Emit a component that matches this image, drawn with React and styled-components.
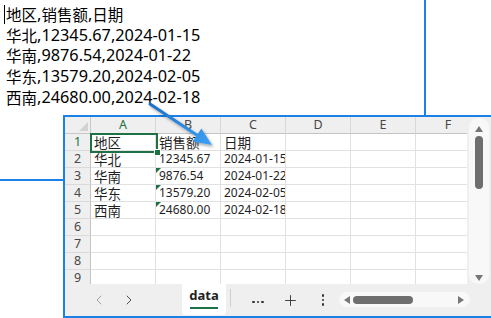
import React from 'react';
import styled, { createGlobalStyle } from 'styled-components';
import { ChevronLeft, ChevronRight, Plus } from 'lucide-react';

const BLUE = '#1a82e6';
const GREEN = '#1e7145';

const Global = createGlobalStyle`
  html, body { margin: 0; padding: 0; background: #fff; overflow: hidden; }
  #root { width: 491px; height: 318px; }
`;

const CJK = /([\u2E80-\u9FFF\uFF00-\uFFEF]+)/;

const Han = styled.span`
  display: inline-block;
  font-family: "Noto Sans CJK SC", sans-serif;
  font-size: ${(p) => p.$size}px;
  line-height: ${(p) => p.$lh}px;
  height: ${(p) => p.$lh}px;
  vertical-align: top;
`;

function Mixed({ text, han, lh }) {
  return text
    .split(CJK)
    .filter(Boolean)
    .map((part, i) =>
      CJK.test(part) ? (
        <Han key={i} $size={han} $lh={lh}>{part}</Han>
      ) : (
        <React.Fragment key={i}>{part}</React.Fragment>
      )
    );
}

const Page = styled.div`
  position: relative;
  width: 491px;
  height: 318px;
  overflow: hidden;
  background: #fff;
  font-family: "Noto Sans", "Noto Sans CJK SC", sans-serif;
`;

/* ---------- CSV text window ---------- */
const TextBox = styled.div`
  position: absolute;
  left: -2px;
  top: -2px;
  width: 428px;
  height: 183px;
  box-sizing: border-box;
  border: 2px solid ${BLUE};
  background: #fff;
  padding: 4px 0 0 4px;
  font-size: 16.3px;
  line-height: 20.7px;
  color: #000;
`;

const TextLine = styled.div`
  white-space: nowrap;
  height: 20.7px;
`;

const Caret = styled.span`
  display: inline-block;
  width: 1px;
  height: 19px;
  background: #000;
  margin-right: 1px;
  vertical-align: top;
  margin-top: 1px;
`;

const Indent = styled.span`
  display: inline-block;
  width: 2px;
`;

/* ---------- Spreadsheet window ---------- */
const SheetWindow = styled.div`
  position: absolute;
  left: 63px;
  top: 115px;
  width: 430px;
  height: 203px;
  box-sizing: border-box;
  border: 2px solid ${BLUE};
  background: #efefef;
  display: grid;
  grid-template-rows: 167px 1fr;
  z-index: 2;
`;

const GridArea = styled.div`
  display: flex;
  min-height: 0;
`;

const Sheet = styled.div`
  position: relative;
  width: 402px;
  overflow: hidden;
  background: #fff;
  display: grid;
  grid-template-columns: 26px repeat(6, 65px);
  grid-auto-rows: 17px;
  font-size: 12px;
  color: #1f1f1f;
`;

const Corner = styled.div`
  position: relative;
  background: #efefef;
  border-right: 1px solid #c8c8c8;
  border-bottom: 1px solid #c8c8c8;
  box-sizing: border-box;
  &::after {
    content: '';
    position: absolute;
    right: 2px;
    bottom: 2px;
    width: 0;
    height: 0;
    border-left: 9px solid transparent;
    border-bottom: 9px solid #d2d2d2;
  }
`;

const ColHead = styled.div`
  background: #efefef;
  border-right: 1px solid #d8d8d8;
  border-bottom: 1px solid #c4c4c4;
  box-sizing: border-box;
  text-align: center;
  font-size: 12.5px;
  line-height: 16px;
  color: ${(p) => (p.$active ? GREEN : '#474747')};
`;

const RowHead = styled.div`
  background: #efefef;
  border-right: 1px solid #c4c4c4;
  border-bottom: 1px solid #dadada;
  box-sizing: border-box;
  text-align: center;
  font-size: 12.5px;
  line-height: 16px;
  color: ${(p) => (p.$active ? GREEN : '#474747')};
`;

const Cell = styled.div`
  position: relative;
  border-right: 1px solid #e1e1e1;
  border-bottom: 1px solid #e1e1e1;
  box-sizing: border-box;
  padding-left: 3px;
  line-height: 16px;
  white-space: nowrap;
  overflow: hidden;
  &::before {
    content: '';
    display: ${(p) => (p.$flag ? 'block' : 'none')};
    position: absolute;
    left: 0;
    top: 0;
    width: 0;
    height: 0;
    border-top: 5px solid ${GREEN};
    border-right: 5px solid transparent;
  }
`;

const Selection = styled.div`
  position: absolute;
  left: 25px;
  top: 16px;
  width: 68px;
  height: 20px;
  box-sizing: border-box;
  border: 2px solid ${GREEN};
  pointer-events: none;
  &::after {
    content: '';
    position: absolute;
    right: -5px;
    bottom: -5px;
    width: 5px;
    height: 5px;
    background: ${GREEN};
    border: 1px solid #fff;
  }
`;

const VScroll = styled.div`
  width: 24px;
  background: #efefef;
  display: flex;
  padding: 1px 2px 0;
  box-sizing: border-box;
`;

const VTrack = styled.div`
  flex: 1;
  background: #f8f8f8;
  border-radius: 9px;
  display: flex;
  flex-direction: column;
  align-items: center;
  padding: 8px 0 3px;
  box-sizing: border-box;
`;

const TriUp = styled.div`
  width: 0;
  height: 0;
  border-left: 4.5px solid transparent;
  border-right: 4.5px solid transparent;
  border-bottom: 6px solid #777;
`;

const TriDown = styled.div`
  width: 0;
  height: 0;
  border-left: 4.5px solid transparent;
  border-right: 4.5px solid transparent;
  border-top: 6px solid #777;
`;

const VThumb = styled.div`
  width: 8px;
  height: 53px;
  margin-top: 4px;
  border-radius: 4px;
  background: #6e6e6e;
`;

const Spacer = styled.div`
  flex: 1;
`;

/* ---------- Bottom bar ---------- */
const BottomBar = styled.div`
  display: flex;
  align-items: stretch;
  background: #efefef;
  padding-left: 22px;
`;

const IconBtn = styled.div`
  width: 24px;
  display: flex;
  align-items: center;
  justify-content: center;
  margin-left: ${(p) => p.$ml || 0}px;
  color: ${(p) => p.$color || '#333'};
`;

const Tab = styled.div`
  width: 44px;
  margin-left: 41px;
  margin-bottom: 1px;
  background: #fff;
  border-radius: 0 0 4px 4px;
  display: flex;
  flex-direction: column;
  align-items: center;
  justify-content: center;
  font-family: "Noto Sans", sans-serif;
  font-weight: 700;
  font-size: 13px;
  color: #222;
`;

const TabLabel = styled.span`
  line-height: 15px;
  margin-top: -2px;
`;

const TabUnderline = styled.div`
  width: 28px;
  height: 2px;
  background: ${GREEN};
  margin-top: 4px;
`;

const Separator = styled.div`
  width: 1px;
  background: #cfcfcf;
  margin: 5px 0 9px 4px;
`;

const DotRow = styled.div`
  display: flex;
  flex-direction: ${(p) => (p.$vertical ? 'column' : 'row')};
  gap: 2px;
  margin-top: ${(p) => (p.$vertical ? 0 : 4)}px;
`;

const Dot = styled.span`
  width: 2.4px;
  height: 2.4px;
  border-radius: 50%;
  background: #333;
`;

const HTrack = styled.div`
  width: 131px;
  margin: 8px 0 9px 4px;
  border-radius: 8px;
  background: #f8f8f8;
  display: flex;
  align-items: center;
  padding: 0 6px 0 5px;
  box-sizing: border-box;
`;

const TriLeft = styled.div`
  width: 0;
  height: 0;
  border-top: 4.5px solid transparent;
  border-bottom: 4.5px solid transparent;
  border-right: 6px solid #777;
`;

const TriRight = styled.div`
  width: 0;
  height: 0;
  border-top: 4.5px solid transparent;
  border-bottom: 4.5px solid transparent;
  border-left: 6px solid #777;
`;

const HThumb = styled.div`
  width: 60px;
  height: 8px;
  margin-left: 3px;
  border-radius: 4px;
  background: #6e6e6e;
`;

const ArrowLayer = styled.svg`
  position: absolute;
  left: 0;
  top: 0;
  width: 491px;
  height: 318px;
  pointer-events: none;
  z-index: 5;
`;

const csvLines = [
  '地区,销售额,日期',
  '华北,12345.67,2024-01-15',
  '华南,9876.54,2024-01-22',
  '华东,13579.20,2024-02-05',
  '西南,24680.00,2024-02-18',
];

const rows = [
  ['地区', '销售额', '日期'],
  ['华北', '12345.67', '2024-01-15'],
  ['华南', '9876.54', '2024-01-22'],
  ['华东', '13579.20', '2024-02-05'],
  ['西南', '24680.00', '2024-02-18'],
  [],
  [],
  [],
  [],
];

const cols = ['A', 'B', 'C', 'D', 'E', 'F'];

export default function App() {
  return (
    <Page>
      <Global />
      <TextBox>
        {csvLines.map((line, i) => (
          <TextLine key={i}>
            {i === 0 ? <Caret /> : <Indent />}
            <Mixed text={line} han={15.5} lh={20.7} />
          </TextLine>
        ))}
      </TextBox>

      <SheetWindow>
        <GridArea>
          <Sheet>
            <Corner />
            {cols.map((c) => (
              <ColHead key={c} $active={c === 'A'}>{c}</ColHead>
            ))}
            {rows.map((r, ri) => (
              <React.Fragment key={ri}>
                <RowHead $active={ri === 0}>{ri + 1}</RowHead>
                {cols.map((c, ci) => (
                  <Cell key={c} $flag={ci === 1 && ri > 0 && ri < 5}>
                    {r[ci] ? <Mixed text={r[ci]} han={13.5} lh={16} /> : null}
                  </Cell>
                ))}
              </React.Fragment>
            ))}
            <Selection />
          </Sheet>
          <VScroll>
            <VTrack>
              <TriUp />
              <VThumb />
              <Spacer />
              <TriDown />
            </VTrack>
          </VScroll>
        </GridArea>
        <BottomBar>
          <IconBtn $color="#9a9a9a">
            <ChevronLeft size={16} strokeWidth={1.4} />
          </IconBtn>
          <IconBtn $ml={6} $color="#444">
            <ChevronRight size={16} strokeWidth={1.4} />
          </IconBtn>
          <Tab>
            <TabLabel>data</TabLabel>
            <TabUnderline />
          </Tab>
          <Separator />
          <IconBtn $ml={15}>
            <DotRow>
              <Dot />
              <Dot />
              <Dot />
            </DotRow>
          </IconBtn>
          <IconBtn $ml={8}>
            <Plus size={17} strokeWidth={1.3} />
          </IconBtn>
          <IconBtn $ml={9}>
            <DotRow $vertical>
              <Dot />
              <Dot />
              <Dot />
            </DotRow>
          </IconBtn>
          <HTrack>
            <TriLeft />
            <HThumb />
            <Spacer />
            <TriRight />
          </HTrack>
        </BottomBar>
      </SheetWindow>

      <ArrowLayer viewBox="0 0 491 318">
        <defs>
          <linearGradient id="arrowGrad" x1="150" y1="104" x2="212" y2="145" gradientUnits="userSpaceOnUse">
            <stop offset="0" stopColor="#1c6fc4" />
            <stop offset="1" stopColor="#3ba0f6" />
          </linearGradient>
          <filter id="arrowShadow" x="-30%" y="-30%" width="160%" height="160%">
            <feDropShadow dx="1.5" dy="2" stdDeviation="1.4" floodColor="#000" floodOpacity="0.35" />
          </filter>
        </defs>
        <g filter="url(#arrowShadow)">
          <line x1="150" y1="104" x2="199" y2="136.5" stroke="url(#arrowGrad)" strokeWidth="3" strokeLinecap="round" />
          <polygon points="212,145 201.4,128.4 192.6,141.6" fill="url(#arrowGrad)" />
        </g>
      </ArrowLayer>
    </Page>
  );
}
